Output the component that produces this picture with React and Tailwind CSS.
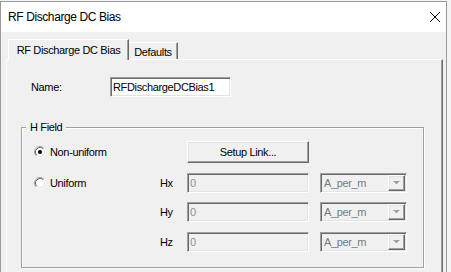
import React from "react";

const sunken =
  "border border-t-[#a0a0a0] border-l-[#a0a0a0] border-b-white border-r-white shadow-[inset_1px_1px_0_#696969,inset_-1px_-1px_0_#e3e3e3]";
const raised =
  "border border-t-white border-l-white border-b-[#696969] border-r-[#696969] shadow-[inset_-1px_-1px_0_#a0a0a0,inset_1px_1px_0_#e3e3e3]";

function Radio({ checked }) {
  return (
    <svg width="12" height="12" viewBox="0 0 12 12" className="shrink-0">
      <circle cx="6" cy="6" r="4.2" fill="#fff" />
      <path d="M2.11 9.89 A5.5 5.5 0 0 1 9.89 2.11" stroke="#a0a0a0" fill="none" />
      <path d="M9.89 2.11 A5.5 5.5 0 0 1 2.11 9.89" stroke="#ffffff" fill="none" />
      <path d="M2.82 9.18 A4.5 4.5 0 0 1 9.18 2.82" stroke="#696969" fill="none" />
      <path d="M9.18 2.82 A4.5 4.5 0 0 1 2.82 9.18" stroke="#e3e3e3" fill="none" />
      {checked && <circle cx="6" cy="6" r="2" fill="#000" />}
    </svg>
  );
}

function Combo() {
  return (
    <div className={sunken + " ml-[11px] w-[87px] h-[20px] bg-[#f0f0f0] flex items-stretch p-[1px]"}>
      <span className="flex-1 pl-[2px] flex items-center text-[#737b87]">A_per_m</span>
      <div className={raised + " w-[17px] bg-[#f0f0f0] flex items-center justify-center"}>
        <svg width="7" height="5" viewBox="0 0 7 5">
          <path d="M1 1 H7 L4 4 Z" fill="#ffffff" />
          <path d="M0 0 H7 L3.5 3.5 Z" fill="#a0a0a0" />
        </svg>
      </div>
    </div>
  );
}

function FieldRow({ label, radio, mt }) {
  return (
    <div className={"flex items-center h-[20px] " + mt}>
      <div className="w-[126px] flex items-center gap-[4px]">
        {radio && (
          <>
            <Radio />
            <span>Uniform</span>
          </>
        )}
      </div>
      <span className="w-[27px]">{label}</span>
      <div className={sunken + " w-[122px] h-[20px] bg-[#f0f0f0] pl-[2px] flex items-center text-[#8a8f96]"}>0</div>
      <Combo />
    </div>
  );
}

export default function App() {
  return (
    <div className="w-[451px] h-[272px] overflow-hidden bg-[#f4f4f4] pt-[1px] font-['Liberation_Sans',Arial,sans-serif] text-[11px] text-black tracking-[-0.35px]">
      <div className="w-[447px] h-[271px] border-l border-t border-r border-[#9a9a9a] flex flex-col bg-[#f0f0f0]">
        <div className="h-[30px] shrink-0 bg-white flex items-center justify-between pl-[7px] pr-[6px]">
          <span className="text-[12px] tracking-[-0.4px]">RF Discharge DC Bias</span>
          <svg width="10" height="10" viewBox="0 0 10 10">
            <path d="M0 0 L10 10 M10 0 L0 10" stroke="#000" strokeWidth="1" />
          </svg>
        </div>
        <div className="flex-1 flex flex-col pt-[7px] pl-[5px] pr-[3px]">
          <div className="flex items-end h-[20px] pl-[2px]">
            <div className="relative z-10 h-[21px] -mb-[1px] w-[121px] bg-[#f0f0f0] border-l border-t border-r border-l-white border-t-white border-r-[#696969] shadow-[inset_-1px_0_0_#a0a0a0] flex items-center justify-center">
              RF Discharge DC Bias
            </div>
            <div className="h-[17px] w-[49px] border-t border-r border-t-white border-r-[#696969] shadow-[inset_-1px_0_0_#a0a0a0] flex items-center justify-center pt-[2px]">
              Defaults
            </div>
          </div>
          <div className="flex-1 border-l border-t border-r border-l-white border-t-white border-r-[#696969] shadow-[inset_-1px_0_0_#a0a0a0] pl-[14px] pt-[17px]">
            <div className="flex items-center h-[20px]">
              <span className="ml-[10px] w-[79px]">Name:</span>
              <div className={sunken + " w-[121px] h-[20px] bg-white pl-[2px] flex items-center"}>RFDischargeDCBias1</div>
            </div>
            <div className="relative mt-[30px] w-[403px] h-[141px] border border-[#a0a0a0] shadow-[inset_1px_1px_0_#fff,1px_1px_0_#fff] pt-[13px] pl-[12px]">
              <span className="absolute left-[4px] top-[-7px] px-[4px] leading-[13px] bg-[#f0f0f0]">H Field</span>
              <div className="flex items-center h-[22px]">
                <div className="w-[126px] flex items-center gap-[4px]">
                  <Radio checked />
                  <span>Non-uniform</span>
                </div>
                <div className="w-[27px]" />
                <button className={raised + " w-[122px] h-[22px] bg-[#f0f0f0] flex items-center justify-center"}>Setup Link...</button>
              </div>
              <FieldRow label="Hx" radio mt="mt-[10px]" />
              <FieldRow label="Hy" mt="mt-[9px]" />
              <FieldRow label="Hz" mt="mt-[10px]" />
            </div>
          </div>
        </div>
      </div>
    </div>
  );
}
